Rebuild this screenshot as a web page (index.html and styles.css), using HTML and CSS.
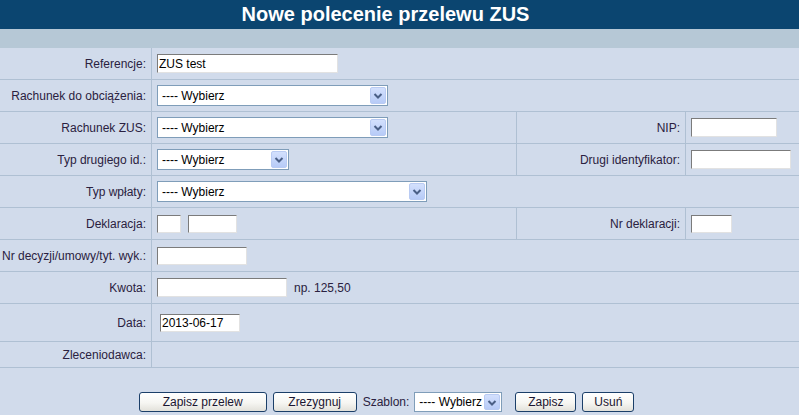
FILE: index.html
```html
<!DOCTYPE html>
<html lang="pl">
<head>
<meta charset="utf-8">
<title>Nowe polecenie przelewu ZUS</title>
<link rel="stylesheet" href="styles.css">
</head>
<body>
<div class="header"><h1>Nowe polecenie przelewu ZUS</h1></div>
<div class="band"></div>
<div class="form">
  <div class="lbl">Referencje:</div>
  <div class="val span3"><input class="inp w181" value="ZUS test"></div>

  <div class="lbl">Rachunek do obciążenia:</div>
  <div class="val span3">
    <div class="sel w231"><span class="txt">---- Wybierz</span><span class="arr"><svg width="14" height="15" viewBox="0 0 14 15"><path d="M3.5 6 L7 9.5 L10.5 6" fill="none" stroke="#4a5f86" stroke-width="2"/></svg></span></div>
  </div>

  <div class="lbl">Rachunek ZUS:</div>
  <div class="val">
    <div class="sel w231"><span class="txt">---- Wybierz</span><span class="arr"><svg width="14" height="15" viewBox="0 0 14 15"><path d="M3.5 6 L7 9.5 L10.5 6" fill="none" stroke="#4a5f86" stroke-width="2"/></svg></span></div>
  </div>
  <div class="lbl">NIP:</div>
  <div class="val"><input class="inp w86"></div>

  <div class="lbl">Typ drugiego id.:</div>
  <div class="val">
    <div class="sel w132"><span class="txt">---- Wybierz</span><span class="arr"><svg width="14" height="15" viewBox="0 0 14 15"><path d="M3.5 6 L7 9.5 L10.5 6" fill="none" stroke="#4a5f86" stroke-width="2"/></svg></span></div>
  </div>
  <div class="lbl">Drugi identyfikator:</div>
  <div class="val"><input class="inp w100"></div>

  <div class="lbl">Typ wpłaty:</div>
  <div class="val span3">
    <div class="sel w270"><span class="txt">---- Wybierz</span><span class="arr"><svg width="14" height="15" viewBox="0 0 14 15"><path d="M3.5 6 L7 9.5 L10.5 6" fill="none" stroke="#4a5f86" stroke-width="2"/></svg></span></div>
  </div>

  <div class="lbl">Deklaracja:</div>
  <div class="val"><input class="inp w24 h18"><input class="inp w49 h18"></div>
  <div class="lbl">Nr deklaracji:</div>
  <div class="val"><input class="inp w41 h18"></div>

  <div class="lbl">Nr decyzji/umowy/tyt. wyk.:</div>
  <div class="val span3"><input class="inp w90 h18"></div>

  <div class="lbl">Kwota:</div>
  <div class="val span3"><input class="inp w130"><span class="hint">np. 125,50</span></div>

  <div class="lbl">Data:</div>
  <div class="val span3"><input class="inp w80 h18 date" value="2013-06-17"></div>

  <div class="lbl">Zleceniodawca:</div>
  <div class="val span3"></div>
</div>
<div class="actions">
  <button class="btn w128">Zapisz przelew</button>
  <button class="btn w84">Zrezygnuj</button>
  <span class="szablon">Szablon:</span>
  <div class="sel w88 h20"><span class="txt">---- Wybierz</span><span class="arr"><svg width="14" height="15" viewBox="0 0 14 15"><path d="M3.5 6 L7 9.5 L10.5 6" fill="none" stroke="#4a5f86" stroke-width="2"/></svg></span></div>
  <button class="btn w61 after-sel">Zapisz</button>
  <button class="btn w52">Usuń</button>
</div>
</body>
</html>
```
FILE: styles.css
```css
html, body {
  margin: 0;
  padding: 0;
}
body {
  background: #d1dbeb;
  font-family: "Liberation Sans", Arial, sans-serif;
  font-size: 12px;
  color: #2a2140;
}
.header {
  height: 29px;
  background: #0b4570;
  display: flex;
  align-items: center;
  justify-content: center;
  padding-right: 28px;
}
.header h1 {
  margin: 0;
  color: #ffffff;
  font-size: 20px;
  font-weight: bold;
  line-height: 29px;
}
.band {
  height: 19px;
  background: #b6c8d6;
}
.form {
  display: grid;
  grid-template-columns: 151px 364px 168px 1fr;
  grid-template-rows: repeat(8, 31px) 37px 25px;
  gap: 1px;
  background: #afc0d3;
  border-bottom: 1px solid #afc0d3;
}
.form > div {
  background: #d1dbeb;
  display: flex;
  align-items: center;
}
.lbl {
  justify-content: flex-end;
  padding-right: 5px;
  white-space: nowrap;
}
.val {
  padding-left: 5px;
  gap: 7px;
}
.span3 {
  grid-column: span 3;
}
.inp {
  box-sizing: border-box;
  height: 19px;
  margin: 0;
  padding: 0 1px;
  border: 1px solid;
  border-color: #7b7b7b #e2e2e2 #e2e2e2 #7b7b7b;
  background: #ffffff;
  font-family: "Liberation Sans", Arial, sans-serif;
  font-size: 12px;
  color: #000000;
  outline: none;
}
.h18 { height: 18px; }
.date { margin-left: 3px; }
.w24 { width: 24px; }
.w41 { width: 41px; }
.w49 { width: 49px; }
.w80 { width: 80px; }
.w86 { width: 86px; }
.w90 { width: 90px; }
.w100 { width: 100px; }
.w130 { width: 130px; }
.w181 { width: 181px; }
.hint {
  color: #2a2140;
}
.sel {
  box-sizing: border-box;
  height: 21px;
  display: flex;
  align-items: center;
  border: 1px solid #7f9db9;
  background: #ffffff;
  color: #000000;
}
.sel.h20 { height: 20px; }
.w88 { width: 88px; }
.w132 { width: 132px; }
.w231 { width: 231px; }
.w270 { width: 270px; }
.sel .txt {
  flex: 1;
  padding-left: 4px;
  white-space: nowrap;
  overflow: hidden;
}
.sel .arr {
  box-sizing: border-box;
  width: 16px;
  height: calc(100% - 2px);
  margin-right: 1px;
  border: 1px solid #b9cbf3;
  border-radius: 2px;
  background: linear-gradient(#d3e0fd, #b7cbf7);
  display: flex;
  align-items: center;
  justify-content: center;
}
.actions {
  display: flex;
  justify-content: center;
  align-items: center;
  padding: 24px 26px 0 0;
  gap: 6px;
}
.btn {
  box-sizing: border-box;
  height: 20px;
  margin: 0;
  padding: 0;
  border: 1px solid #1b3f69;
  border-radius: 3px;
  background: linear-gradient(#ffffff 0%, #f6f6f2 55%, #e2e1da 100%);
  font-family: "Liberation Sans", Arial, sans-serif;
  font-size: 12px;
  color: #1a1530;
}
.w128 { width: 128px; }
.w84 { width: 84px; }
.w61 { width: 61px; }
.w52 { width: 52px; }
.szablon {
  margin-right: -1px;
}
.after-sel {
  margin-left: 7px;
}
```
